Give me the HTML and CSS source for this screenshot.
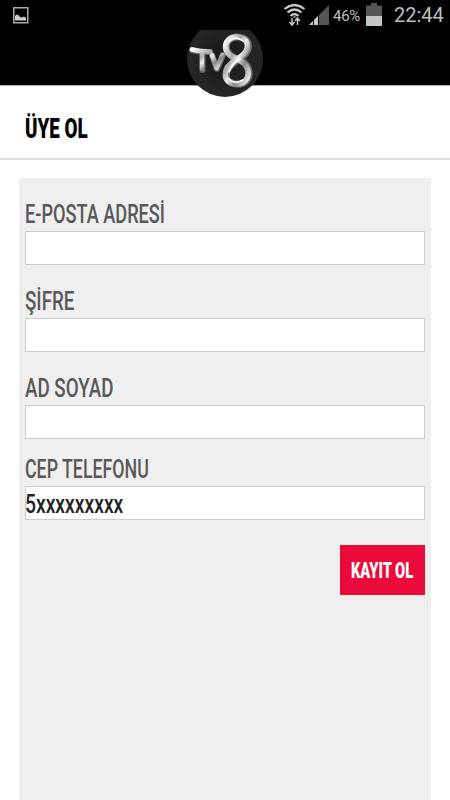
FILE: index.html
```html
<!DOCTYPE html>
<html lang="tr">
<head>
<meta charset="utf-8">
<title>Üye Ol</title>
<link rel="stylesheet" href="styles.css">
</head>
<body>
<header class="top">
  <div class="status">
    <svg class="picture" width="16" height="17" viewBox="0 0 16 17"><path d="M.8.8h14v15H.8z" fill="none" stroke="#aaa" stroke-width="1.5"/><path d="M2 13.500V9l2-1.500 2 1 1 1.500 2 .5 2-1 2 1.500v2.500z" fill="#ccc"/></svg>
    <svg class="wifi" width="24" height="24" viewBox="0 0 24 24"><g fill="none" stroke="#c8c8c8" stroke-width="2.200"><path d="M.5 5Q10.500-3 20.500 5M3.500 8.500Q10.500 2.500 17.500 8.500M6.500 12Q10.500 8 14.500 12"/></g><path d="M8.500 13.500Q10.500 11 12.500 13.500z" fill="#c8c8c8"/><path d="M8 14v7m-2.500-3L8 21l2.500-3M13.500 21v-7m-2.500 3 2.500-3 2.500 3" fill="none" stroke="#c8c8c8" stroke-width="1.500"/></svg>
    <svg class="signal" width="20" height="20" viewBox="0 0 20 20"><path d="M0 20 20 0v20z" fill="#555"/><path d="M0 20l4-4v4zM5 20v-5l4-4v9z" fill="#ccc"/><path d="M4.500 14v6M9.500 9v11" stroke="#000"/></svg>
    <span class="percent">46%</span>
    <svg class="battery" width="16" height="23" viewBox="0 0 16 23"><path d="M5 0h6v2.500h5V13H0V2.500h5z" fill="#555"/><path d="M0 13h16v10H0z" fill="#c5c5c5"/></svg>
    <span class="clock">22:44</span>
  </div>
  <svg class="logo" width="76" height="68" viewBox="0 0 76 68">
    <defs>
      <linearGradient id="metal" x1="0" y1="0" x2="1" y2="1"><stop offset="0" stop-color="#fff"/><stop offset=".35" stop-color="#aaa"/><stop offset=".5" stop-color="#eee"/><stop offset=".7" stop-color="#888"/><stop offset="1" stop-color="#f5f5f5"/></linearGradient>
      <radialGradient id="disc"><stop offset="0" stop-color="#171717"/><stop offset="1" stop-color="#272727"/></radialGradient>
    </defs>
    <circle cx="38" cy="29" r="38" fill="url(#disc)"/>
    <g fill="none" stroke-linecap="round" stroke-linejoin="round">
      <path d="M5 20Q12 22 23 22M15.500 24V40M25 25l5 14 6-14" stroke="#666" stroke-width="6"/>
      <path d="M5 19.500Q12 21.500 23 21.500M15 23V39M25 25l4.500 13 6-13" stroke="url(#metal)" stroke-width="4.500"/>
      <path d="M51 29C34 24 37 7 50 7S67 20 51 30S36 53 50 54S68 36 51 29Z" stroke="#6c6c6c" stroke-width="7"/>
      <path d="M50 29C33 23 37 7 49.500 7S66 20 50 29S35 53 49 54S67 36 50 29Z" stroke="url(#metal)" stroke-width="5.500"/>
      <path d="M42 11q6-6 14 0M42 42q3-8 11-13M42 49q6 6 14 1" stroke="#fff" stroke-width="1.500"/>
    </g>
  </svg>
</header>
<h1 class="title"><span class="fit fit-title">ÜYE OL</span></h1>
<form class="panel">
  <div class="field"><label class="label" for="mail"><span class="fit fit-mail">E-POSTA ADRESİ</span></label><input class="box" id="mail"></div>
  <div class="field"><label class="label" for="pass"><span class="fit fit-pass">ŞİFRE</span></label><input class="box" id="pass"></div>
  <div class="field field-tight"><label class="label" for="name"><span class="fit fit-name">AD SOYAD</span></label><input class="box" id="name"></div>
  <div class="field"><div class="label"><span class="fit fit-phone">CEP TELEFONU</span></div><div class="box value"><span class="fit fit-value">5xxxxxxxxx</span></div></div>
  <button class="submit" type="button"><span class="fit fit-submit">KAYIT OL</span></button>
</form>
</body>
</html>
```
FILE: styles.css
```css
* { box-sizing: border-box; }
body { margin: 0; height: 800px; overflow: hidden; background: #fff; font-family: Roboto, sans-serif; display: flex; flex-direction: column; }
.top { position: relative; height: 86px; background: #000; flex: none; border-bottom: 1px solid #aaa; }
.status { display: flex; height: 30px; color: #bebebe; padding-left: 13px; align-items: flex-start; }
.status svg { flex: none; }
.picture { margin-top: 7px; }
.wifi { margin: 4px 0 0 255px; }
.signal { margin: 5px 0 0 1px; }
.percent { width: 29px; margin: 7px 0 0 4px; font-size: 15px; line-height: 18px; letter-spacing: -.3px; }
.battery { margin: 3px 0 0 4px; }
.clock { margin: 3px 0 0 12px; font-size: 20px; line-height: 24px; }
.logo { position: absolute; left: 187px; top: 30px; }
.title { margin: 0; height: 74px; flex: none; border-bottom: 2px solid #dcdcdc; padding: 27px 0 0 25px; font-size: 27px; line-height: 32px; font-weight: 900; color: #000; }
.panel { flex: 1; margin: 18px 19px 0; padding: 21px 6px 0; background: #efefef; display: flex; flex-direction: column; }
.fit { display: inline-block; white-space: nowrap; transform-origin: left center; }
.field { margin-bottom: 21px; }
.field-tight { margin-bottom: 15px; }
.label { display: block; height: 32px; font-size: 26px; line-height: 30px; font-weight: 500; color: #585858; }
.box { display: block; width: 100%; height: 34px; margin: 0; padding: 0; border: 1px solid #ccc; border-radius: 0; background: #fff; outline: 0; }
.value { color: #222; font-size: 26px; font-weight: 500; line-height: 34px; }
.submit { align-self: flex-end; width: 85px; height: 50px; margin-top: 4px; border: 0; border-bottom: 1px solid #ff1010; padding: 0 0 0 11px; background: #eb0b3b; color: #fff; font: 900 22.5px/48px Roboto, sans-serif; text-align: left; }
.fit-title { transform: scaleX(.695); }
.fit-mail { transform: scaleX(.698); }
.fit-pass { transform: scaleX(.72); }
.fit-name { transform: scaleX(.722); }
.fit-phone { transform: scaleX(.684); }
.fit-value { margin-left: -1px; transform: scaleX(.742); }
.fit-submit { transform: scaleX(.65); }
```
